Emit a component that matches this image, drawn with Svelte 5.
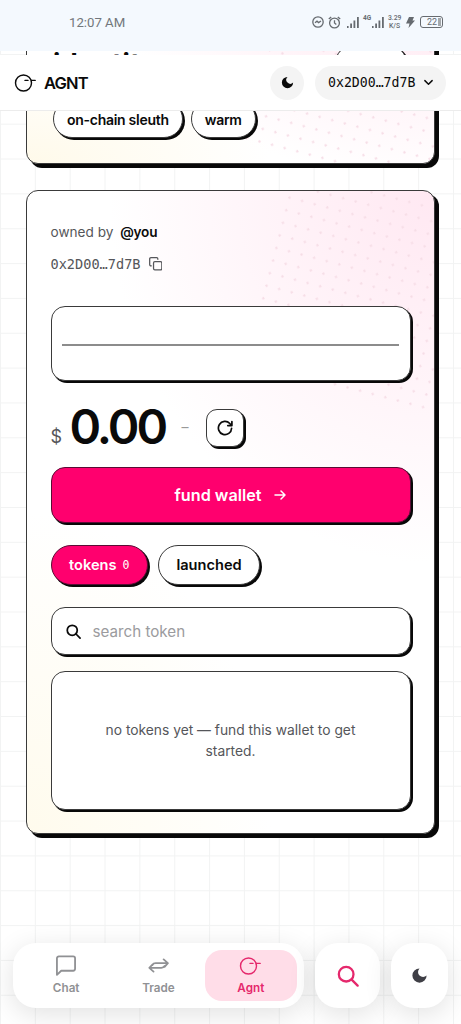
<script>
  const traits = ['on-chain sleuth', 'warm']
  const address = '0x2D00…7d7B'

  let tab = $state('tokens')
  let query = $state('')
  let tokens = $state([])
  let balance = $state(0)
</script>

{#snippet moon()}
  <svg viewBox="0 0 24 24" fill="currentColor"><path d="M12 3a6 6 0 0 0 9 9 9 9 0 1 1-9-9z"/></svg>
{/snippet}

{#snippet logo()}
  <svg viewBox="0 0 24 20" fill="none" stroke="currentColor" stroke-width="1.4" stroke-linecap="round"><circle cx="9.5" cy="10" r="8"/><path d="M11 7.4h3M17.6 7.4h3.6"/></svg>
{/snippet}

{#snippet magnifier(w)}
  <svg viewBox="0 0 24 24" fill="none" stroke="currentColor" stroke-width={w} stroke-linecap="round"><circle cx="10" cy="10" r="8"/><path d="M16 16l6.5 6.5"/></svg>
{/snippet}

<div class="phone">
  <div class="status">
    <span class="clock">12:07 AM</span>
    <div class="sys">
      <svg class="s12" viewBox="0 0 12 12" fill="none" stroke="currentColor" stroke-width="1.3"><circle cx="6" cy="6" r="5.2"/><path d="M3 6.8l2-1.6 1.6 1.4L9 5" /></svg>
      <svg class="s13" viewBox="0 0 13 13" fill="none" stroke="currentColor" stroke-width="1.3"><circle cx="6.5" cy="7" r="4.9"/><path d="M6.5 4.2V7l1.8 1.5M.8 3L3.2.9M12.2 3L9.8.9"/></svg>
      <svg class="bars first" viewBox="0 0 12 12" fill="currentColor"><path d="M0 10h1.6v2H0zM3.2 7.5h1.8v4.5H3.2zM6.5 4.5h1.8v7.5H6.5zM10 1h1.8v11H10z"/></svg>
      <span class="net">4G</span>
      <svg class="bars second" viewBox="0 0 12 12" fill="currentColor"><path d="M0 10h1.6v2H0zM3.2 7.5h1.8v4.5H3.2zM6.5 4.5h1.8v7.5H6.5zM10 1h1.8v11H10z"/></svg>
      <span class="rate">3.29<br />K/S</span>
      <svg class="bolt" viewBox="0 0 9 11" fill="currentColor"><path d="M3 0h5L6.5 3.5H9L2.5 11l1-4.5H0z"/></svg>
      <span class="batt">22<i></i></span>
    </div>
  </div>

  <div class="page">
    <header>
      <span class="logo">{@render logo()}</span>
      <b class="brand">AGNT</b>
      <button class="theme" aria-label="theme">{@render moon()}</button>
      <button class="account">
        <span>{address}</span>
        <svg viewBox="0 0 10 10" fill="none" stroke="currentColor" stroke-width="1.3" stroke-linecap="round" stroke-linejoin="round"><path d="M1.7 3.3L5 6.6l3.3-3.3"/></svg>
      </button>
    </header>

    <section class="card identity">
      <div class="dots"></div>
      <div class="title-row">
        <h2>identity</h2>
        <span class="edit"></span>
      </div>
      <div class="traits">
        {#each traits as t}
          <span class="chip">{t}</span>
        {/each}
      </div>
    </section>

    <section class="card wallet">
      <div class="dots"></div>
      <div class="owner">owned by <b>@you</b></div>
      <div class="addr">
        <span>{address}</span>
        <svg viewBox="0 0 14 14" fill="none" stroke="currentColor" stroke-width="1.3" stroke-linejoin="round" stroke-linecap="round"><rect x="4.7" y="4.7" width="8.6" height="8.6" rx="1.4"/><path d="M2.4 9.2H2A1.3 1.3 0 0 1 .7 7.9V2A1.3 1.3 0 0 1 2 .7h5.9A1.3 1.3 0 0 1 9.2 2v.4"/></svg>
      </div>

      <div class="box chart"><div class="flat"></div></div>

      <div class="balance">
        <span class="cur">$</span>
        <span class="amount">{balance.toFixed(2)}</span>
        <span class="delta">–</span>
        <button class="refresh" aria-label="refresh">
          <svg viewBox="0 0 16 16" fill="none" stroke="currentColor" stroke-width="1.7" stroke-linecap="round" stroke-linejoin="round"><path d="M14.6 8.3A6.6 6.6 0 1 1 12.8 3.5L14.7 5.4M14.9 1.5v4.1h-4.1"/></svg>
        </button>
      </div>

      <button class="fund">
        <span>fund wallet</span>
        <svg viewBox="0 0 12 12" fill="none" stroke="currentColor" stroke-width="1.5" stroke-linecap="round" stroke-linejoin="round"><path d="M1 6h10M7 2l4 4-4 4"/></svg>
      </button>

      <div class="tabs">
        <button class="chip" class:on={tab === 'tokens'} onclick={() => (tab = 'tokens')}>tokens <small>{tokens.length}</small></button>
        <button class="chip" class:on={tab === 'launched'} onclick={() => (tab = 'launched')}>launched</button>
      </div>

      <label class="box search">
        {@render magnifier(2.8)}
        <input placeholder="search token" bind:value={query} />
      </label>

      <div class="box empty">no tokens yet — fund this wallet to get<br />started.</div>
    </section>

    <nav>
      <div class="dock">
        <a class="item" href="#chat">
          <svg class="chat" viewBox="0 0 22 22" fill="none" stroke="currentColor" stroke-width="1.9" stroke-linejoin="round"><path d="M3.5 1.5h15A2 2 0 0 1 20.5 3.5v11a2 2 0 0 1-2 2H6L1.5 20.8V3.5a2 2 0 0 1 2-2z"/></svg>
          <span>Chat</span>
        </a>
        <a class="item" href="#trade">
          <svg class="trade" viewBox="0 0 22 16" fill="none" stroke="currentColor" stroke-width="1.9" stroke-linecap="round" stroke-linejoin="round"><path d="M16.5 1.5L21 5.5l-3.5 4M21 5.5H8Q5.5 5.5 4.5 7.5M5 6.5L1.2 10.5l4.500 4M1.2 10.5H14q2.5 0 3.5-2"/></svg>
          <span>Trade</span>
        </a>
        <a class="item active" href="#agnt">
          {@render logo()}
          <span>Agnt</span>
        </a>
      </div>
      <button class="round find" aria-label="search">{@render magnifier(2.5)}</button>
      <button class="round dark" aria-label="theme">{@render moon()}</button>
    </nav>
  </div>
</div>

<style>
  :global(body) { margin: 0; overflow: hidden; }
  * { box-sizing: border-box; }
  svg { display: block; flex-shrink: 0; }
  button { font: inherit; color: inherit; cursor: pointer; padding: 0; border: 0; }

  .phone {
    width: 461px; height: 1024px; overflow: hidden;
    font-family: Inter, "Liberation Sans", sans-serif;
    color: #0a0a0a; background: #fff;
  }

  /* --- System bar --- */
  .status {
    height: 51px; background: #f4f9fe; color: #666b70;
    display: flex; justify-content: space-between; align-items: center;
    padding: 0 18px 7px 69px;
  }
  .clock { font: 13.2px Roboto, sans-serif; color: #72777c; }
  .sys { display: flex; align-items: center; font-family: Roboto, sans-serif; }
  .s12 { width: 12px; height: 12px; }
  .s13 { width: 13px; height: 13px; margin-left: 4px; }
  .bars { width: 12px; height: 12px; }
  .first { margin-left: 6px; }
  .net { font-size: 6.5px; font-weight: 700; margin: 0 0 8px 4px; width: 8px; line-height: 7px; }
  .second { margin-left: 1px; }
  .rate { font-size: 6.8px; font-weight: 500; line-height: 8px; text-align: center; width: 13px; margin-left: 4px; }
  .bolt { width: 9px; height: 11px; margin-left: 5px; }
  .batt {
    width: 23px; height: 12px; margin-left: 5px; padding-right: 1px;
    border: 1.2px solid currentColor; border-radius: 3px;
    display: flex; align-items: center; justify-content: flex-end; gap: 1px;
    font-size: 9px; line-height: 9px;
  }
  .batt i { width: 3px; height: 8px; background: #a4a8ab; }

  .page {
    position: relative; height: 973px; overflow: hidden;
    background-color: #fff;
    background-image:
      linear-gradient(to right, #f2f3f3 1px, transparent 1px),
      linear-gradient(to bottom, #f2f3f3 1px, transparent 1px);
    background-size: 34.85px 34.85px;
    background-position: 0 3px;
  }

  header {
    position: absolute; top: 4px; left: 0; right: 0; z-index: 5;
    height: 56px; background: #fff; border-bottom: 1px solid #ececec;
    display: flex; align-items: center; padding: 0 15px 0 14px;
  }
  .logo svg { width: 24px; height: 20px; }
  .brand { font-size: 16.5px; font-weight: 600; letter-spacing: -0.8px; margin-left: 6px; }
  .theme {
    margin-left: auto; width: 34px; height: 34px; border-radius: 50%;
    background: #f4f4f4; display: grid; place-items: center;
  }
  .theme svg { width: 15px; height: 15px; }
  .account {
    margin-left: 11px; width: 131px; height: 34px; border-radius: 17px;
    background: #f4f4f4; display: flex; align-items: center; padding-left: 13px; gap: 8px;
    font: 500 13.2px "DejaVu Sans Mono", monospace;
  }
  .account svg { width: 11px; height: 11px; }

  /* --- Cards --- */
  .card {
    position: relative; margin: 0 26px; width: 409px;
    border: 1px solid #3a3a3a; border-radius: 12px; box-shadow: 4px 4px 0 #080808;
    background:
      radial-gradient(ellipse 80% 58% at 100% 0, #ffe8f2, rgba(255, 232, 242, 0)),
      radial-gradient(ellipse 60% 50% at 0 100%, #fffbed, rgba(255, 251, 237, 0)),
      #fff;
  }
  .dots {
    position: absolute; inset: 0; overflow: hidden; border-radius: 11px;
  }
  .dots::before {
    content: ''; position: absolute; left: 213px; top: -33px; width: 260px; height: 204px;
    transform: rotate(14.6deg); transform-origin: 0 100%;
    background: radial-gradient(circle, #f6dde6 0.9px, transparent 1.5px) 0 0 / 13px 13px;
  }
  .card > :not(.dots) { position: relative; }

  .identity {
    margin-top: -91px; height: 204px; padding: 0 26px 25px;
    display: flex; flex-direction: column; justify-content: flex-end;
    background:
      radial-gradient(ellipse 80% 110% at 100% 0, #ffe4ef, rgba(255, 228, 239, 0)),
      radial-gradient(ellipse 60% 50% at 0 100%, #fffaea, rgba(255, 250, 234, 0)),
      #fff;
  }
  .identity .dots::before { top: -26px; }
  .title-row { display: flex; justify-content: space-between; align-items: center; height: 36px; margin-bottom: 18px; }
  h2 { margin: 0; font-size: 27px; line-height: 36px; font-weight: 700; letter-spacing: 0.5px; }
  .edit {
    width: 72px; height: 36px; margin: -2px 1px 0 0; border: 1px solid #222;
    border-radius: 18px; background: #fff; box-shadow: 2px 2px 0 #080808;
  }
  .traits { display: flex; gap: 8px; }

  .chip {
    height: 38px; padding: 0 13px; border: 1px solid #3a3a3a; border-radius: 20px;
    background: #fff; box-shadow: 2px 2px 0 #080808;
    font-size: 14px; font-weight: 600; letter-spacing: -0.28px;
    display: inline-flex; align-items: center; white-space: nowrap;
  }

  .wallet { margin-top: 26px; height: 644px; padding: 27px 23.5px 0; }
  .owner { height: 28px; line-height: 28px; font-size: 13.6px; color: #55565a; }
  .owner b { color: #0a0a0a; font-weight: 600; margin-left: 3px; letter-spacing: -0.2px; }
  .addr {
    height: 28px; margin-top: 4px; display: flex; align-items: center; gap: 8px;
    font: 13.6px "DejaVu Sans Mono", monospace; color: #55565a;
  }
  .addr svg { width: 13.5px; height: 13.5px; }

  .box {
    width: 360px; border: 1px solid #3a3a3a; border-radius: 14px;
    background: #fff; box-shadow: 2px 2px 0 #080808;
  }
  .chart { height: 75px; margin-top: 28px; padding: 0 10.5px; display: flex; align-items: center; }
  .flat { height: 2px; width: 100%; background: #8c8c8c; margin-top: 2px; }

  .balance { display: flex; height: 38px; margin-top: 28px; align-items: center; }
  .cur { font-size: 18px; color: #55565a; width: 19px; margin-top: 17px; }
  .amount { font-size: 48px; font-weight: 600; line-height: 38px; letter-spacing: -3px; width: 112px; margin-top: -2px; }
  .delta { color: #999; font-size: 14px; width: 24px; margin-top: -3px; }
  .refresh {
    width: 38px; height: 38px; border: 1px solid #3a3a3a; border-radius: 11px; background: #fff;
    box-shadow: 2px 2px 0 #080808; display: grid; place-items: center;
  }
  .refresh svg { width: 16px; height: 16px; }

  .fund {
    width: 360px; height: 56px; margin-top: 20px; border: 1px solid #5a0c34; border-radius: 14px;
    background: #ff006e; color: #fff; box-shadow: 2px 2px 0 #080808;
    display: flex; align-items: center; justify-content: center; gap: 13px;
    font-size: 16.2px; font-weight: 600;
  }
  .fund svg { width: 12px; height: 12px; }

  .tabs { display: flex; gap: 10px; margin-top: 22px; }
  .tabs .chip { height: 40px; padding: 0 17.5px; font-size: 14.6px; letter-spacing: 0; }
  .tabs .on { background: #ff006e; color: #fff; border-color: #5a0c34; }
  .tabs small { font: 11.5px "DejaVu Sans Mono", monospace; margin-left: 6px; }

  .search { display: flex; align-items: center; height: 48px; margin-top: 22px; padding-left: 14px; }
  .search svg { width: 15px; height: 15px; }
  input {
    border: 0; outline: 0; background: none; padding: 0; margin-left: 12px; flex: 1; min-width: 0;
    font: 15.2px Inter, sans-serif; color: #0a0a0a;
  }
  input::placeholder { color: #9b9b9e; opacity: 1; }

  .empty {
    height: 139px; margin-top: 16px; display: flex; align-items: center; justify-content: center;
    text-align: center; font-size: 13.8px; line-height: 21px; color: #55565a;
  }

  /* --- Bottom nav --- */
  nav {
    position: absolute; left: 13px; right: 13px; bottom: 16px; z-index: 5;
    display: flex; height: 65px;
  }
  .dock, .round { background: #fff; box-shadow: 0 6px 28px rgba(0, 0, 0, 0.12); }
  .dock { width: 291px; border-radius: 23px; display: flex; padding: 7px; }
  .item {
    flex: 1; display: flex; flex-direction: column; align-items: center; justify-content: flex-end;
    padding-bottom: 6px; gap: 5px; border-radius: 17px; color: #909194; text-decoration: none;
    font-size: 11.7px; font-weight: 600; line-height: 14px;
  }
  .chat { width: 22px; height: 21px; }
  .trade { width: 21px; height: 15px; margin-bottom: 3px; }
  .active { color: #e5286c; background: #ffdde8; }
  .active svg { width: 24px; height: 20px; }
  .round { display: grid; place-items: center; border-radius: 23px; }
  .find { width: 65px; margin-left: 11px; color: #e5286c; }
  .find svg { width: 22px; height: 22px; }
  .dark { width: 57px; margin-left: 11px; color: #3f3f46; }
  .dark svg { width: 19px; height: 19px; }
</style>
